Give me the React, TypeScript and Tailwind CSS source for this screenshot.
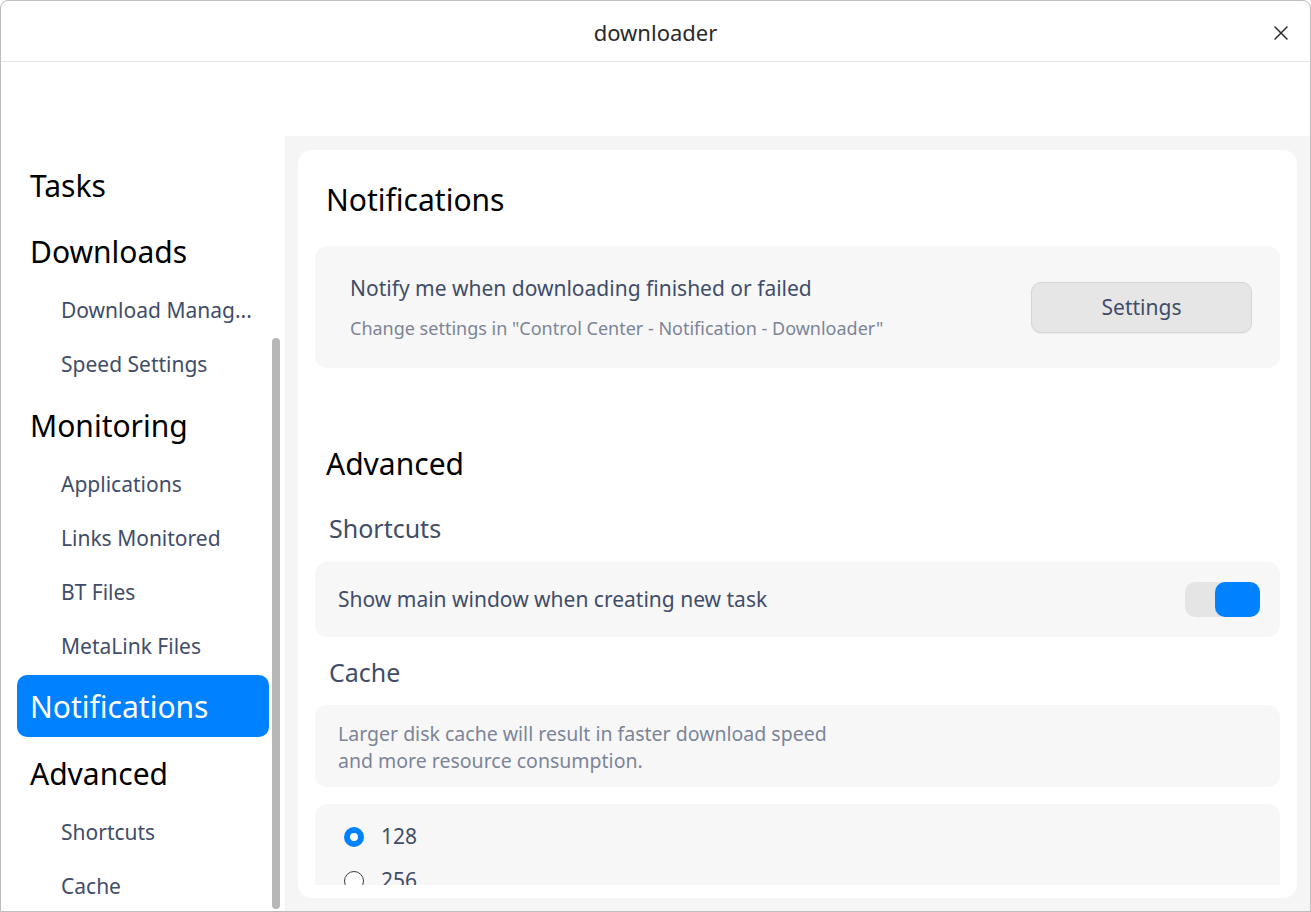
import React from "react";

const FONT = { fontFamily: '"Noto Sans", "Open Sans", sans-serif' };

type Item = { label: string; kind: "h" | "s"; mt: number; active?: boolean };

const items: Item[] = [
  { label: "Tasks", kind: "h", mt: 0 },
  { label: "Downloads", kind: "h", mt: 4 },
  { label: "Download Manag...", kind: "s", mt: 1 },
  { label: "Speed Settings", kind: "s", mt: 0 },
  { label: "Monitoring", kind: "h", mt: 3 },
  { label: "Applications", kind: "s", mt: 1 },
  { label: "Links Monitored", kind: "s", mt: 0 },
  { label: "BT Files", kind: "s", mt: 0 },
  { label: "MetaLink Files", kind: "s", mt: 0 },
  { label: "Notifications", kind: "h", mt: 2, active: true },
  { label: "Advanced", kind: "h", mt: 5 },
  { label: "Shortcuts", kind: "s", mt: 1 },
  { label: "Cache", kind: "s", mt: 0 },
];

function SideItem({ item }: { item: Item }) {
  if (item.kind === "h") {
    return (
      <div
        style={{ marginTop: item.mt }}
        className={
          "h-[62px] shrink-0 flex items-center pl-[13px] rounded-[10px] text-[30px] whitespace-nowrap " +
          (item.active ? "bg-[#0081ff] text-white" : "text-black")
        }
      >
        {item.label}
      </div>
    );
  }
  return (
    <div
      style={{ marginTop: item.mt }}
      className="h-[54px] shrink-0 flex items-center pl-[44px] pt-[2px] text-[21px] text-[#414d68] whitespace-nowrap"
    >
      {item.label}
    </div>
  );
}

function Radio({ checked, label }: { checked?: boolean; label: string }) {
  return (
    <div className="h-[44px] flex items-center pt-[2px]">
      {checked ? (
        <div className="w-[20px] h-[20px] rounded-full border-[6px] border-[#0081ff] bg-white" />
      ) : (
        <div className="w-[20px] h-[20px] rounded-full border-[1.5px] border-[#3c3c3c] bg-white" />
      )}
      <span className="ml-[17px] text-[21px] text-[#414d68]">{label}</span>
    </div>
  );
}

export default function App() {
  return (
    <div
      style={FONT}
      className="w-[1311px] h-[912px] bg-white border border-[#bdbdbd] rounded-t-[8px] flex flex-col overflow-hidden"
    >
      {/* Title bar */}
      <div className="h-[61px] shrink-0 border-b border-[#e5e5e5] relative flex items-center justify-center pt-[3px]">
        <span className="text-[22px] text-[#2a2a2a]">downloader</span>
        <button className="absolute right-[20px] top-[23px] w-[18px] h-[18px] flex items-center justify-center">
          <svg width="14" height="14" viewBox="0 0 14 14">
            <path d="M1 1L13 13M13 1L1 13" stroke="#2b2b2b" strokeWidth="1.5" strokeLinecap="round" />
          </svg>
        </button>
      </div>

      {/* Body */}
      <div className="flex-1 flex min-h-0">
        {/* Sidebar */}
        <div className="w-[284px] shrink-0 relative overflow-hidden">
          <div className="flex flex-col pt-[92px] pl-[16px] pr-[16px]">
            {items.map((it) => (
              <SideItem key={it.label} item={it} />
            ))}
          </div>
          <div className="absolute left-[271px] top-[276px] w-[8px] h-[571px] rounded-full bg-[#b7b7b7]" />
        </div>

        {/* Right */}
        <div className="flex-1 flex flex-col min-w-0">
          <div className="h-[74px] shrink-0 bg-white" />
          <div className="flex-1 bg-[#f5f5f5] pt-[14px] pb-[13px] px-[13px] flex min-h-0">
            <div className="flex-1 bg-white rounded-[14px] pb-[13px] flex flex-col min-h-0">
              <div className="flex-1 overflow-hidden px-[17px] flex flex-col">
                {/* Notifications */}
                <div className="h-[58px] mt-[20px] shrink-0 flex items-center pl-[11px] text-[30px] text-black">
                  Notifications
                </div>
                <div className="mt-[18px] h-[122px] shrink-0 rounded-[12px] bg-[#f7f7f7] flex items-center pl-[35px] pr-[28px]">
                  <div className="flex-1 flex flex-col">
                    <div className="text-[21px] text-[#414d68] leading-[28px]">
                      Notify me when downloading finished or failed
                    </div>
                    <div className="mt-[14px] text-[18px] text-[#7c8598] leading-[24px]">
                      Change settings in "Control Center - Notification - Downloader"
                    </div>
                  </div>
                  <button className="w-[221px] h-[51px] rounded-[10px] bg-[#e6e6e6] border border-[#d6d6d6] shadow-[0_1px_1px_rgba(0,0,0,0.06)] text-[21px] text-[#414d68] pt-[1px]">
                    Settings
                  </button>
                </div>

                {/* Advanced */}
                <div className="h-[58px] mt-[66px] shrink-0 flex items-center pl-[11px] text-[30px] text-black">
                  Advanced
                </div>
                <div className="h-[70px] shrink-0 flex items-center pl-[14px] pt-[4px] text-[25px] text-[#414d68]">
                  Shortcuts
                </div>
                <div className="h-[75px] shrink-0 rounded-[12px] bg-[#f7f7f7] flex items-center pl-[23px] pr-[20px]">
                  <div className="flex-1 text-[21px] text-[#414d68]">
                    Show main window when creating new task
                  </div>
                  <div className="w-[75px] h-[35px] rounded-[10px] bg-[#e5e5e5] flex justify-end">
                    <div className="w-[45px] h-[35px] rounded-[10px] bg-[#0081ff]" />
                  </div>
                </div>
                <div className="h-[68px] shrink-0 flex items-center pl-[14px] pt-[4px] text-[25px] text-[#414d68]">
                  Cache
                </div>
                <div className="h-[82px] shrink-0 rounded-[12px] bg-[#f7f7f7] flex items-center pl-[23px] pt-[2px]">
                  <div className="text-[19.5px] leading-[27px] text-[#7c8598]">
                    Larger disk cache will result in faster download speed
                    <br />
                    and more resource consumption.
                  </div>
                </div>
                <div className="mt-[17px] shrink-0 rounded-[12px] bg-[#f7f7f7] pl-[29px] pt-[10px] pb-[10px]">
                  <Radio checked label="128" />
                  <Radio label="256" />
                  <Radio label="512" />
                  <Radio label="1024" />
                </div>
              </div>
            </div>
          </div>
        </div>
      </div>
    </div>
  );
}
